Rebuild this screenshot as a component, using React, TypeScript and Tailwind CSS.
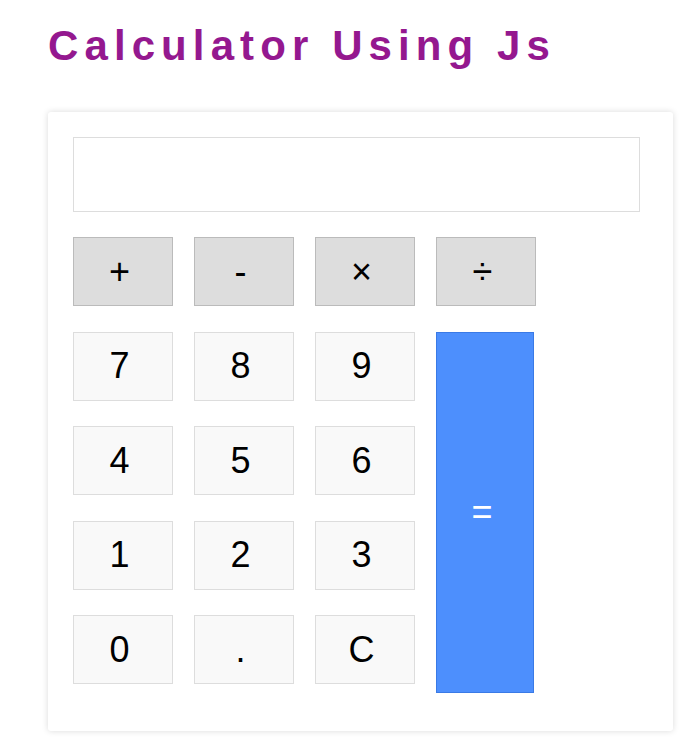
const numBtn =
  'h-[69px] w-[100px] bg-[#f9f9f9] border border-[#dddddd] pr-[7px] text-[36px] text-black flex items-center justify-center';
const opBtn =
  'h-[69px] w-[100px] bg-[#dddddd] border border-[#bbbbbb] pr-[7px] text-[36px] text-black flex items-center justify-center';

export default function App() {
  const ops = ['+', '-', '×', '÷'];
  const rows = [
    ['7', '8', '9'],
    ['4', '5', '6'],
    ['1', '2', '3'],
    ['0', '.', 'C'],
  ];

  return (
    <div className="min-h-screen bg-white pl-[48px] font-['Liberation_Sans',Arial,sans-serif]">
      <h1 className="pt-[25px] text-[42px] leading-[42px] font-bold tracking-[6.1px] text-[#94188f]">
        Calculator Using Js
      </h1>

      <div className="mt-[45px] w-[625px] rounded-[3px] bg-white pt-[25px] pl-[25px] pb-[47px] shadow-[0_0_6px_rgba(0,0,0,0.15)]">
        <input
          type="text"
          readOnly
          className="block h-[75px] w-[567px] border border-[#dddddd] bg-white outline-none"
        />

        <div className="mt-[25px] grid grid-cols-[repeat(4,100px)] grid-rows-[repeat(5,69px)] gap-x-[21px] gap-y-[25.5px]">
          {ops.map((op) => (
            <button key={op} className={opBtn}>
              {op}
            </button>
          ))}

          {rows.map((row, i) =>
            row.map((key) => (
              <button key={key} className={numBtn} style={{ gridRow: i + 2 }}>
                {key}
              </button>
            ))
          )}

          <button className="col-start-4 row-start-2 row-span-4 self-start h-[361px] w-[98px] bg-[#4d8ffd] border border-[#3a7ae6] pr-[6px] text-[36px] text-white flex items-center justify-center">
            =
          </button>
        </div>
      </div>
    </div>
  );
}
